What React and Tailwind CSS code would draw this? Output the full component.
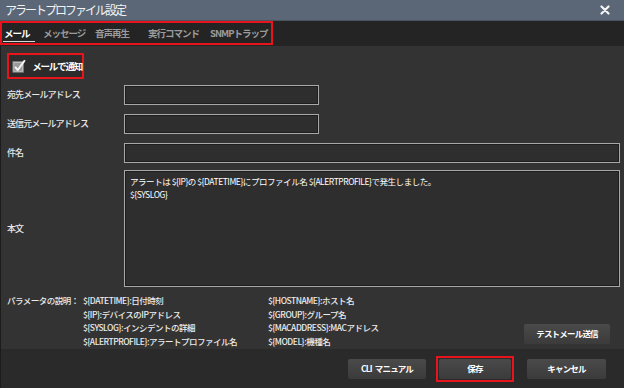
const font = { fontFamily: '"Noto Sans CJK JP", "Noto Sans", sans-serif' };

const tabs = [
  { label: "メール", w: "w-[40px] pl-[2px]" },
  { label: "メッセージ", w: "w-[52px]" },
  { label: "音声再生", w: "w-[53px]" },
  { label: "実行コマンド", w: "w-[62px]" },
  { label: "SNMPトラップ", w: "w-[62px]" },
];

const params = [
  ["${DATETIME}:日付時刻", "${HOSTNAME}:ホスト名"],
  ["${IP}:デバイスのIPアドレス", "${GROUP}:グループ名"],
  ["${SYSLOG}:インシデントの詳細", "${MACADDRESS}:MACアドレス"],
  ["${ALERTPROFILE}:アラートプロファイル名", "${MODEL}:機種名"],
];

const Field = ({ label, wide }) => (
  <div className="flex items-center h-[20px]">
    <div className="w-[123px] pl-[6px] text-[9px] tracking-[-0.9px] font-medium text-[#e8e8e8] whitespace-nowrap">
      {label}
    </div>
    <div
      className={`h-[20px] border border-[#a8a8a8] bg-[#2e2e2e] shadow-[inset_0_0_0_1px_#1e1e1e] ${
        wide ? "w-[496px]" : "w-[195px]"
      }`}
    />
  </div>
);

const Button = ({ children, className = "" }) => (
  <div
    className={`h-[20px] flex items-center justify-center bg-gradient-to-b from-[#4a4a4a] to-[#3b3b3b] rounded-[2px] text-[8.5px] tracking-[-0.8px] font-bold text-white whitespace-nowrap ${className}`}
  >
    {children}
  </div>
);

const App = () => {
  return (
    <div className="w-[624px] h-[388px] flex flex-col bg-[#333333] overflow-hidden" style={font}>
      {/* title bar */}
      <div className="h-[21px] flex items-center justify-between bg-[#5b6777] pl-[5px] pr-[14px] border-b border-[#4a5563]">
        <span className="text-[12px] tracking-[-2px] text-[#f2f2f2] leading-none whitespace-nowrap">
          アラートプロファイル設定
        </span>
        <svg width="10" height="10" viewBox="0 0 10 10">
          <path d="M1.5 1.5 L8.5 8.5 M8.5 1.5 L1.5 8.5" stroke="#f4f4f4" strokeWidth="2.2" strokeLinecap="round" />
        </svg>
      </div>

      {/* tabs */}
      <div className="h-[25px] bg-[#242424] flex">
        <div className="w-[273px] h-[24px] border-2 border-[#e8141c] flex items-center text-[9.5px] tracking-[-1px] font-bold whitespace-nowrap">
          {tabs.map((t, i) => (
            <div
              key={t.label}
              className={`relative h-full flex items-center pl-[1px] ${t.w} ${i === 0 ? "text-white" : "text-[#9b9b9b]"}`}
            >
              {t.label}
              {i === 0 && <div className="absolute left-[1px] w-[32px] bottom-[1px] h-[1px] bg-[#d8d8d8]" />}
            </div>
          ))}
        </div>
      </div>

      {/* content */}
      <div className="flex-1 flex flex-col border-l border-[#1c1c1c]">
        <div className="mt-[7px] ml-[6px] w-[77px] h-[26px] border-2 border-[#e8141c] bg-[#2c2c2c] flex items-center pl-[3px] gap-[6px]">
          <svg width="16" height="16" viewBox="0 0 16 16">
            <rect x="1" y="3" width="12" height="12" fill="#c4c4c4" stroke="#7a7a7a" />
            <rect x="2.5" y="4.5" width="9" height="9" fill="#9a9a9a" />
            <path d="M3.5 9 L6.5 12.5 L14.5 1.5" stroke="#f5f5f5" strokeWidth="2.2" fill="none" strokeLinejoin="round" />
          </svg>
          <span className="text-[9.5px] tracking-[-1.2px] font-bold text-white whitespace-nowrap">メールで通知</span>
        </div>

        <div className="mt-[6px] flex flex-col gap-[9px]">
          <Field label="宛先メールアドレス" />
          <Field label="送信元メールアドレス" />
          <Field label="件名" wide />
        </div>

        <div className="mt-[7px] flex items-center">
          <div className="w-[123px] pl-[6px] text-[9px] tracking-[-0.9px] font-medium text-[#e8e8e8]">本文</div>
          <div className="w-[496px] h-[117px] border border-[#a8a8a8] bg-[#2e2e2e] shadow-[inset_0_0_0_1px_#1e1e1e] px-[5px] pt-[4px] text-[8.5px] tracking-[-0.45px] leading-[13px] text-white whitespace-nowrap">
            <div>アラートは ${"{IP}"}の ${"{DATETIME}"}にプロファイル名 ${"{ALERTPROFILE}"}で発生しました。</div>
            <div>${"{SYSLOG}"}</div>
          </div>
        </div>

        <div className="mt-[7px] flex text-[8.5px] tracking-[-0.5px] leading-[13.5px] text-[#ececec] font-medium whitespace-nowrap">
          <div className="w-[82px] pl-[6px]">パラメータの説明：</div>
          <div className="w-[185px]">
            {params.map((p) => (
              <div key={p[0]}>{p[0]}</div>
            ))}
          </div>
          <div className="w-[256px]">
            {params.map((p) => (
              <div key={p[1]}>{p[1]}</div>
            ))}
          </div>
          <div className="flex items-end pb-[4px]">
            <Button className="w-[86px]">テストメール送信</Button>
          </div>
        </div>
      </div>

      {/* footer */}
      <div className="h-[39px] bg-[#2a2a2a] flex items-center justify-end pr-[18px] border-l border-[#1c1c1c]">
        <Button className="w-[78px] gap-[3px]">
          <span>CLI</span>
          <span>マニュアル</span>
        </Button>
        <div className="ml-[10px] border-2 border-[#e8141c] p-[1px]">
          <Button className="w-[72px]">保存</Button>
        </div>
        <Button className="w-[79px] ml-[13px]">キャンセル</Button>
      </div>
    </div>
  );
};

export default App;
